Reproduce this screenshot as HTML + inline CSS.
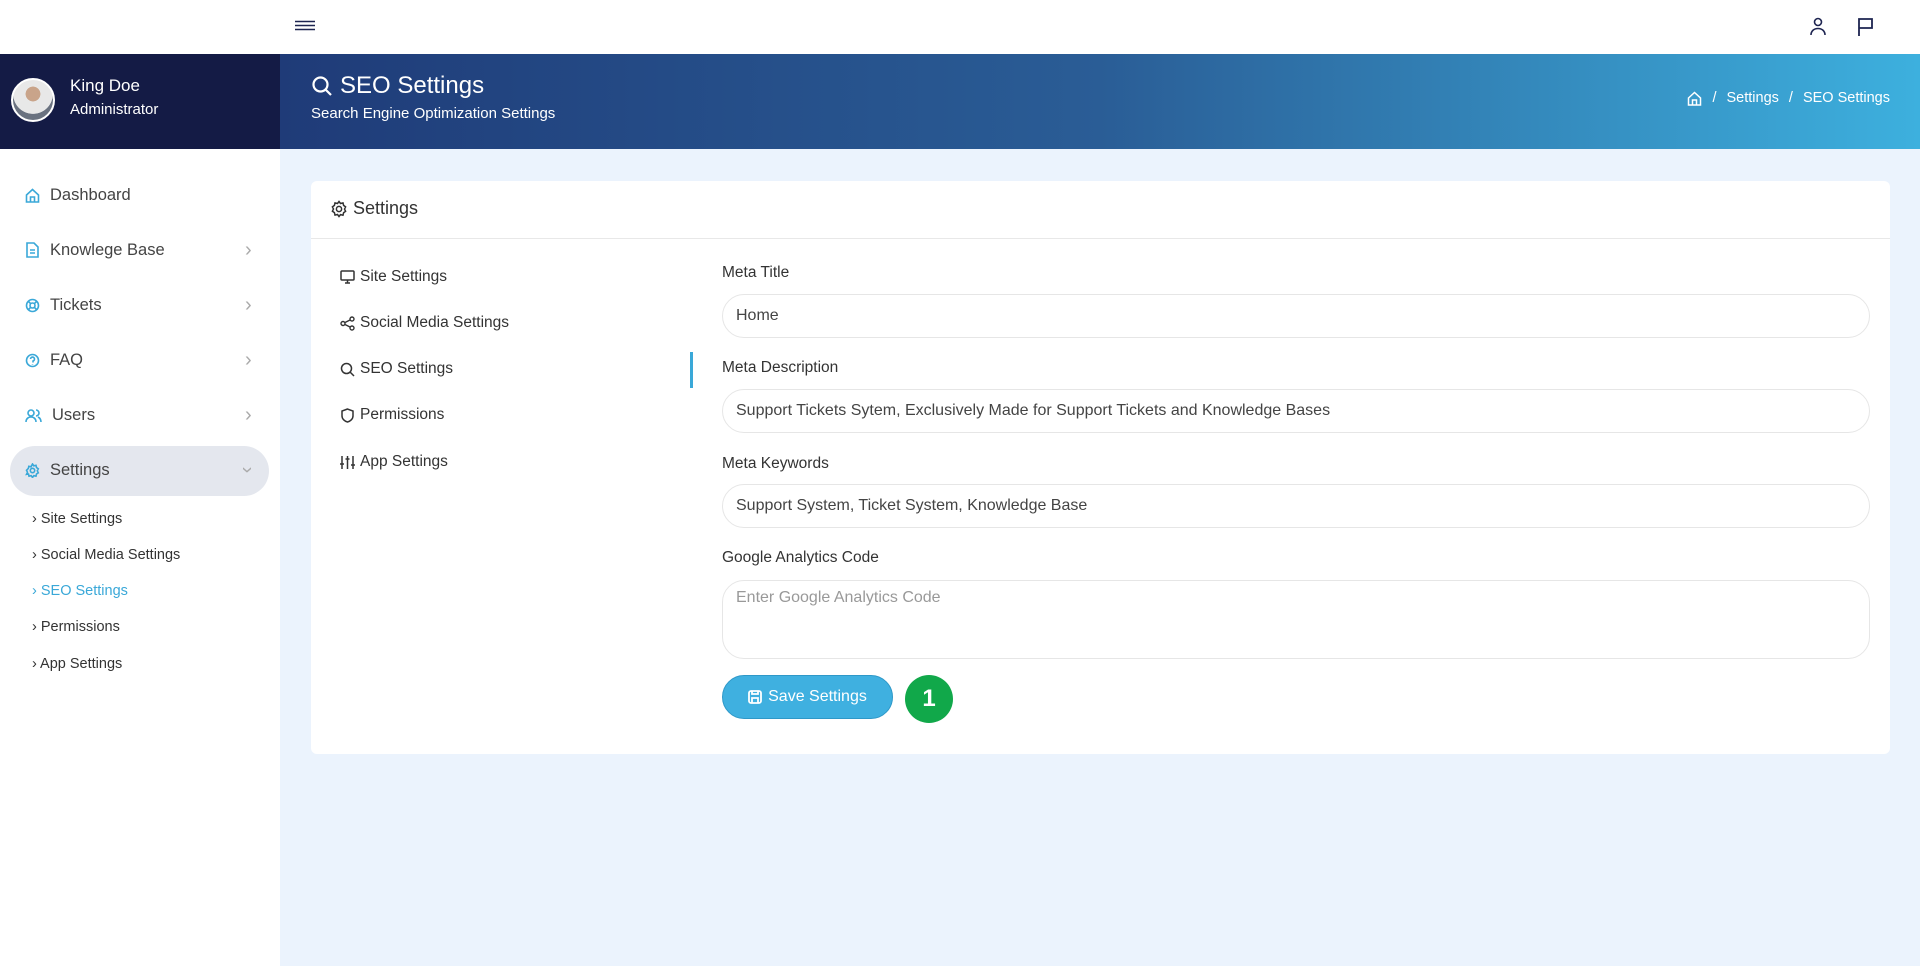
<!DOCTYPE html>
<html><head><meta charset="utf-8"><style>
*{box-sizing:border-box;margin:0;padding:0}
body{width:1920px;height:966px;overflow:hidden;background:#ebf3fd;font-family:"Liberation Sans",sans-serif;color:#333;position:relative}
.a{position:absolute}
.top{left:0;top:0;width:1920px;height:54px;background:#fff}
.side{left:0;top:149px;width:280px;height:817px;background:#fff}
.user{left:0;top:54px;width:280px;height:95px;background:#141b45}
.ban{left:280px;top:54px;width:1640px;height:95px;background:linear-gradient(90deg,#1f3b78 0%,#2a5d96 50%,#3db0de 100%)}
.mi{left:25px;font-size:16.5px;color:#444;display:flex;align-items:center;height:24px}
.mi svg{margin-right:10px}
.chev{left:245px;color:#aaa;font-size:20px;line-height:20px}
.sub{left:32px;font-size:14.5px;color:#333}
.card{left:311px;top:181px;width:1579px;height:573px;background:#fff;border-radius:6px}
.tab{left:340px;font-size:15.5px;color:#333;display:flex;align-items:center}
.tab svg{margin-right:5px}
.lbl{left:722px;font-size:15.5px;color:#333}
.inp{left:722px;width:1148px;height:44px;border:1px solid #e6e6e6;border-radius:22px;padding-left:13px;font-size:16px;color:#444;display:flex;align-items:center}
</style></head><body>
<div class="a top"></div>
<svg class="a" style="left:295px;top:20px" width="20" height="12"><path d="M0 1.5h20M0 5.5h20M0 9.5h20" stroke="#1d2450" stroke-width="1.6"/></svg>
<svg class="a" style="left:1808px;top:16px" width="20" height="22" fill="none" stroke="#1d2450" stroke-width="1.6"><circle cx="10" cy="6" r="3.5"/><path d="M3 19c0-4 3-6.5 7-6.5s7 2.5 7 6.5"/></svg>
<svg class="a" style="left:1857px;top:17px" width="18" height="20" fill="none" stroke="#1d2450" stroke-width="1.8"><path d="M2 19V2h13v9H2"/></svg>
<div class="a user"></div>
<div class="a" style="left:11px;top:78px;width:44px;height:44px;border-radius:50%;background:radial-gradient(circle at 50% 35%,#c9a48a 0 22%,#e8e8e8 23% 60%,#6a7280 61%);border:2px solid #fff"></div>
<div class="a" style="left:70px;top:76px;color:#fff;font-size:17px">King Doe</div>
<div class="a" style="left:70px;top:101px;color:#fff;font-size:15px">Administrator</div>
<div class="a ban"></div>
<svg class="a" style="left:311px;top:75px" width="22" height="22" fill="none" stroke="#fff" stroke-width="2.2"><circle cx="9.5" cy="9.5" r="7"/><path d="M15 15l5 5"/></svg>
<div class="a" style="left:340px;top:72px;color:#fff;font-size:24px">SEO Settings</div>
<div class="a" style="left:311px;top:105px;color:#fff;font-size:15px">Search Engine Optimization Settings</div>
<div class="a" style="right:30px;top:90px;color:#fff;font-size:14.5px;display:flex;align-items:center">
<svg width="15" height="15" fill="none" stroke="#fff" stroke-width="1.5"><path d="M1.5 7L7.5 1.5 13.5 7V14H1.5z M5.5 14V9h4v5"/></svg>
<span style="margin:0 10px">/</span>Settings<span style="margin:0 10px">/</span>SEO Settings</div>
<div class="a side"></div>
<div class="a mi" style="top:183px"><svg width="15" height="15" fill="none" stroke="#3aa8d8" stroke-width="1.6"><path d="M1.5 7L7.5 1.5 13.5 7V14H1.5z M5.5 14V9h4v5"/></svg>Dashboard</div>
<div class="a mi" style="top:238px"><svg width="15" height="16" fill="none" stroke="#3aa8d8" stroke-width="1.6"><path d="M2 1h7l4 4v10H2z M5 8h5M5 11h5"/></svg>Knowlege Base</div>
<div class="a chev" style="top:240px">›</div>
<div class="a mi" style="top:293px"><svg width="15" height="15" fill="none" stroke="#3aa8d8" stroke-width="1.6"><circle cx="7.5" cy="7.5" r="6"/><circle cx="7.5" cy="7.5" r="2.5"/><path d="M3.3 3.3l2.4 2.4M11.7 3.3L9.3 5.7M3.3 11.7l2.4-2.4M11.7 11.7L9.3 9.3"/></svg>Tickets</div>
<div class="a chev" style="top:295px">›</div>
<div class="a mi" style="top:348px"><svg width="15" height="15" fill="none" stroke="#3aa8d8" stroke-width="1.6"><circle cx="7.5" cy="7.5" r="6"/><path d="M5.5 6a2 2 0 1 1 2.5 2v1.5M7.5 11.5v.5"/></svg>FAQ</div>
<div class="a chev" style="top:350px">›</div>
<div class="a mi" style="top:403px"><svg width="17" height="15" fill="none" stroke="#3aa8d8" stroke-width="1.6"><circle cx="6" cy="5" r="3"/><path d="M1 14c0-3 2-5 5-5s5 2 5 5M11 2a3 3 0 0 1 0 6M13 9c2 1 3 3 3 5"/></svg>Users</div>
<div class="a chev" style="top:405px">›</div>
<div class="a" style="left:10px;top:446px;width:259px;height:50px;border-radius:25px;background:#e4e7ee"></div>
<div class="a mi" style="top:458px"><svg width="15" height="15" fill="none" stroke="#3aa8d8" stroke-width="1.6"><circle cx="7.5" cy="7.5" r="2.2"/><path d="M7.5 1l1.3 1.8 2.2-.5.5 2.2 1.8 1.3-1 2 1 2-1.8 1.2-.5 2.2-2.2-.5-1.3 1.8-1.3-1.8-2.2.5-.5-2.2L1.5 11.3l1-2-1-2L3.3 5.5 3.8 3.3 6 3.8z"/></svg>Settings</div>
<div class="a chev" style="top:460px;transform:rotate(90deg);left:244px">›</div>
<div class="a sub" style="top:511px">› Site Settings</div>
<div class="a sub" style="top:547px">› Social Media Settings</div>
<div class="a sub" style="top:583px;color:#3aa8d8">› SEO Settings</div>
<div class="a sub" style="top:619px">› Permissions</div>
<div class="a sub" style="top:656px">› App Settings</div>
<div class="a card"></div>
<div class="a" style="left:311px;top:238px;width:1579px;height:1px;background:#e8e8e8"></div>
<div class="a" style="left:330px;top:198px;font-size:18px;color:#333;display:flex;align-items:center"><svg width="18" height="18" fill="none" stroke="#333" stroke-width="1.5" style="margin-right:5px"><circle cx="9" cy="9" r="2.6"/><path d="M9 1.5l1.5 2 2.5-.6.6 2.5 2 1.5-1.1 2.2 1.1 2.2-2 1.4-.6 2.5-2.5-.6L9 16.5l-1.5-2-2.5.6-.6-2.5-2-1.4L3.5 9 2.4 6.9l2-1.5L5 2.9l2.5.6z"/></svg>Settings</div>
<div class="a tab" style="top:268px"><svg width="15" height="14" fill="none" stroke="#333" stroke-width="1.5"><rect x="1" y="1" width="13" height="9" rx="1"/><path d="M5 13h5M7.5 10v3"/></svg>Site Settings</div>
<div class="a tab" style="top:314px"><svg width="15" height="15" fill="none" stroke="#333" stroke-width="1.4"><circle cx="3" cy="7.5" r="2"/><circle cx="12" cy="3" r="2"/><circle cx="12" cy="12" r="2"/><path d="M5 6.5l5-2.5M5 8.5l5 2.5"/></svg>Social Media Settings</div>
<div class="a tab" style="top:360px"><svg width="15" height="15" fill="none" stroke="#333" stroke-width="1.5"><circle cx="6.5" cy="6.5" r="5"/><path d="M10 10l4 4"/></svg>SEO Settings</div>
<div class="a tab" style="top:406px"><svg width="15" height="15" fill="none" stroke="#333" stroke-width="1.5"><path d="M7.5 1L2 3v5c0 3 3 5.5 5.5 6 2.5-.5 5.5-3 5.5-6V3z"/></svg>Permissions</div>
<div class="a tab" style="top:453px"><svg width="15" height="15" fill="none" stroke="#333" stroke-width="1.5"><path d="M2 1v13M7.5 1v13M13 1v13M0 9h4M5.5 4h4M11 10h4"/></svg>App Settings</div>
<div class="a" style="left:690px;top:352px;width:3px;height:36px;background:#3aa8d8"></div>
<div class="a lbl" style="top:264px">Meta Title</div>
<div class="a inp" style="top:294px">Home</div>
<div class="a lbl" style="top:359px">Meta Description</div>
<div class="a inp" style="top:389px">Support Tickets Sytem, Exclusively Made for Support Tickets and Knowledge Bases</div>
<div class="a lbl" style="top:455px">Meta Keywords</div>
<div class="a inp" style="top:484px">Support System, Ticket System, Knowledge Base</div>
<div class="a lbl" style="top:549px">Google Analytics Code</div>
<div class="a inp" style="top:580px;height:79px;align-items:flex-start;padding-top:8px;color:#999">Enter Google Analytics Code</div>
<div class="a" style="left:722px;top:675px;width:171px;height:44px;border-radius:22px;background:#3fb0e0;border:1px solid #2e98c8;color:#fff;font-size:16px;display:flex;align-items:center;justify-content:center"><svg width="14" height="14" fill="none" stroke="#fff" stroke-width="1.8" style="margin-right:6px"><rect x="1" y="1" width="12" height="12" rx="2"/><path d="M4 1v3h6V1M4 13V8h6v5"/></svg>Save Settings</div>
<div class="a" style="left:905px;top:675px;width:48px;height:48px;border-radius:50%;background:#11a84a;color:#fff;font-size:24px;font-weight:bold;display:flex;align-items:center;justify-content:center">1</div>
</body></html>
